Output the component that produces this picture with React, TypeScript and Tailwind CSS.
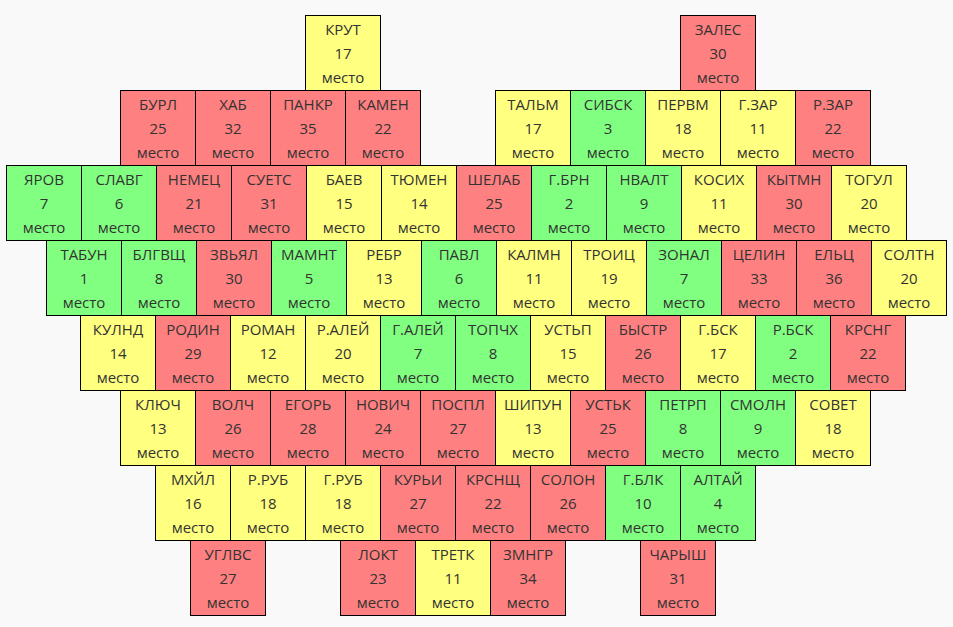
import React from 'react';

type Cell = { name: string; place: number } | null;

const RED = 'bg-[#ff8080]';
const GREEN = 'bg-[#80ff80]';
const YELLOW = 'bg-[#ffff80]';

// colour by rank: 1-10 green, 11-20 yellow, 21+ red
const colorFor = (place: number) => (place <= 10 ? GREEN : place <= 20 ? YELLOW : RED);

const rows: { offset: string; cells: Cell[] }[] = [
    {
        offset: 'ml-[305px]',
        cells: [{ name: 'КРУТ', place: 17 }, null, null, null, null, { name: 'ЗАЛЕС', place: 30 }],
    },
    {
        offset: 'ml-[120px]',
        cells: [
            { name: 'БУРЛ', place: 25 },
            { name: 'ХАБ', place: 32 },
            { name: 'ПАНКР', place: 35 },
            { name: 'КАМЕН', place: 22 },
            null,
            { name: 'ТАЛЬМ', place: 17 },
            { name: 'СИБСК', place: 3 },
            { name: 'ПЕРВМ', place: 18 },
            { name: 'Г.ЗАР', place: 11 },
            { name: 'Р.ЗАР', place: 22 },
        ],
    },
    {
        offset: 'ml-[6px]',
        cells: [
            { name: 'ЯРОВ', place: 7 },
            { name: 'СЛАВГ', place: 6 },
            { name: 'НЕМЕЦ', place: 21 },
            { name: 'СУЕТС', place: 31 },
            { name: 'БАЕВ', place: 15 },
            { name: 'ТЮМЕН', place: 14 },
            { name: 'ШЕЛАБ', place: 25 },
            { name: 'Г.БРН', place: 2 },
            { name: 'НВАЛТ', place: 9 },
            { name: 'КОСИХ', place: 11 },
            { name: 'КЫТМН', place: 30 },
            { name: 'ТОГУЛ', place: 20 },
        ],
    },
    {
        offset: 'ml-[46px]',
        cells: [
            { name: 'ТАБУН', place: 1 },
            { name: 'БЛГВЩ', place: 8 },
            { name: 'ЗВЬЯЛ', place: 30 },
            { name: 'МАМНТ', place: 5 },
            { name: 'РЕБР', place: 13 },
            { name: 'ПАВЛ', place: 6 },
            { name: 'КАЛМН', place: 11 },
            { name: 'ТРОИЦ', place: 19 },
            { name: 'ЗОНАЛ', place: 7 },
            { name: 'ЦЕЛИН', place: 33 },
            { name: 'ЕЛЬЦ', place: 36 },
            { name: 'СОЛТН', place: 20 },
        ],
    },
    {
        offset: 'ml-[80px]',
        cells: [
            { name: 'КУЛНД', place: 14 },
            { name: 'РОДИН', place: 29 },
            { name: 'РОМАН', place: 12 },
            { name: 'Р.АЛЕЙ', place: 20 },
            { name: 'Г.АЛЕЙ', place: 7 },
            { name: 'ТОПЧХ', place: 8 },
            { name: 'УСТЬП', place: 15 },
            { name: 'БЫСТР', place: 26 },
            { name: 'Г.БСК', place: 17 },
            { name: 'Р.БСК', place: 2 },
            { name: 'КРСНГ', place: 22 },
        ],
    },
    {
        offset: 'ml-[120px]',
        cells: [
            { name: 'КЛЮЧ', place: 13 },
            { name: 'ВОЛЧ', place: 26 },
            { name: 'ЕГОРЬ', place: 28 },
            { name: 'НОВИЧ', place: 24 },
            { name: 'ПОСПЛ', place: 27 },
            { name: 'ШИПУН', place: 13 },
            { name: 'УСТЬК', place: 25 },
            { name: 'ПЕТРП', place: 8 },
            { name: 'СМОЛН', place: 9 },
            { name: 'СОВЕТ', place: 18 },
        ],
    },
    {
        offset: 'ml-[155px]',
        cells: [
            { name: 'МХЙЛ', place: 16 },
            { name: 'Р.РУБ', place: 18 },
            { name: 'Г.РУБ', place: 18 },
            { name: 'КУРЬИ', place: 27 },
            { name: 'КРСНЩ', place: 22 },
            { name: 'СОЛОН', place: 26 },
            { name: 'Г.БЛК', place: 10 },
            { name: 'АЛТАЙ', place: 4 },
        ],
    },
    {
        offset: 'ml-[190px]',
        cells: [
            { name: 'УГЛВС', place: 27 },
            null,
            { name: 'ЛОКТ', place: 23 },
            { name: 'ТРЕТК', place: 11 },
            { name: 'ЗМНГР', place: 34 },
            null,
            { name: 'ЧАРЫШ', place: 31 },
        ],
    },
];

const Tile = ({ cell }: { cell: Cell }) => {
    if (!cell) return <div className="w-[75px] h-[76px] shrink-0" />;
    return (
        <div
            className={`w-[76px] h-[76px] shrink-0 -mr-px border border-black flex flex-col items-center justify-center text-[15px] leading-[24px] text-[#333333] ${colorFor(cell.place)}`}
        >
            <div>{cell.name}</div>
            <div>{cell.place}</div>
            <div>место</div>
        </div>
    );
};

export default function App() {
    return (
        <div className="w-[953px] h-[627px] bg-[#f9f9f9] pt-[15px] overflow-hidden" style={{ fontFamily: '"Open Sans", "Noto Sans", sans-serif' }}>
            {rows.map((row, i) => (
                <div key={i} className={`flex -mb-px ${row.offset}`}>
                    {row.cells.map((c, j) => (
                        <Tile key={j} cell={c} />
                    ))}
                </div>
            ))}
        </div>
    );
}
